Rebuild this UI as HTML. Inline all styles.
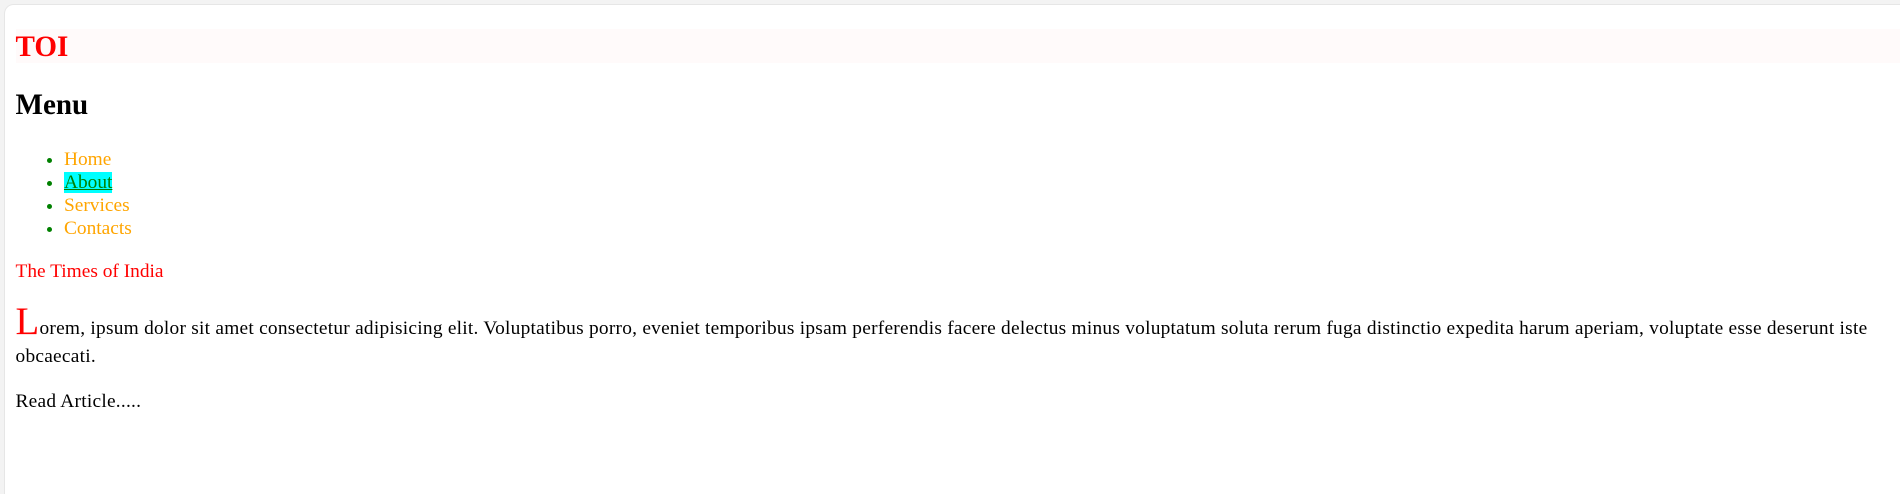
<!DOCTYPE html>
<html><head><meta charset="utf-8"><style>
html,body{margin:0;padding:0;background:#f3f3f3;width:1900px;height:494px;overflow:hidden}
#z{zoom:1.2117;width:1568px;height:408px;position:relative}
#card{position:absolute;left:3px;top:3px;right:0;bottom:0;background:#fff;border-top-left-radius:8px;border-left:1px solid #e6e6e6;border-top:1px solid #e6e6e6}
#in{position:absolute;left:0;top:0;right:0;font-family:"Liberation Serif",serif;font-size:16px;color:#000}
.hd{position:absolute;left:9px;right:0;top:20px;height:28px;background:#fffafa}
.hd h2{margin:0;color:red;font-size:24px;line-height:30px;font-weight:bold}
h2.m{position:absolute;left:9px;top:70px;margin:0;font-size:24px;line-height:28px}
ul{position:absolute;left:9px;top:118px;margin:0;padding-left:40px;color:green;line-height:19px}
ul a{color:orange;text-decoration:none}
ul a.ab{background:cyan;color:green;text-decoration:underline}
.t{position:absolute;left:9px;top:211px;margin:0;color:red;line-height:19px}
.p{position:absolute;left:9px;right:4px;top:252px;margin:0;line-height:23px;letter-spacing:0.2px;white-space:nowrap}
.p span{color:red;font-size:32px;line-height:20px}
.r{position:absolute;left:9px;top:318px;margin:0;line-height:19px;letter-spacing:0.2px}
</style></head><body><div id="z"><div id="card"><div id="in">
<div class="hd"><h2>TOI</h2></div>
<h2 class="m">Menu</h2>
<ul><li><a>Home</a></li><li><a class="ab">About</a></li><li><a>Services</a></li><li><a>Contacts</a></li></ul>
<p class="t">The Times of India</p>
<p class="p"><span>L</span>orem, ipsum dolor sit amet consectetur adipisicing elit. Voluptatibus porro, eveniet temporibus ipsam perferendis facere delectus minus voluptatum soluta rerum fuga distinctio expedita harum aperiam, voluptate esse deserunt iste<br>obcaecati.</p>
<p class="r">Read Article.....</p>
</div></div></div></body></html>
